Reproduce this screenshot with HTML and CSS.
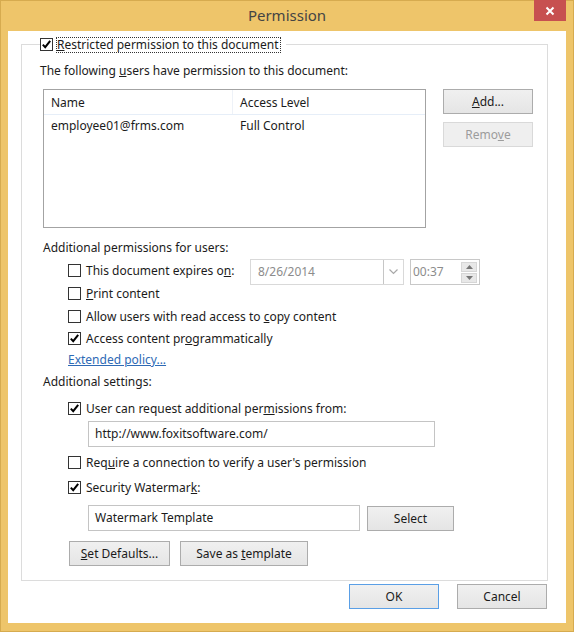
FILE: index.html
```html
<!DOCTYPE html>
<html lang="en">
<head>
    <meta charset="UTF-8">
    <title>Permission</title>
    <link rel="stylesheet" href="styles.css">
</head>
<body>
    <div class="window">
        <div class="titlebar">
            <span></span>
            <div class="title">Permission</div>
            <button class="close" title="Close">
                <svg width="10" height="10" viewBox="0 0 10 10"><path d="M1.5 1.5 L8.5 8.5 M8.5 1.5 L1.5 8.5" stroke="#fff" stroke-width="2"/></svg>
            </button>
        </div>

        <div class="client">
            <fieldset class="group">
                <legend class="legend">
                    <span class="box checked"><svg width="11" height="11" viewBox="0 0 11 11"><path d="M1.8 5.6 L4.2 8.2 L9.2 1.8" fill="none" stroke="#000" stroke-width="2"/></svg></span>
                    <span class="focus"><u>R</u>estricted permission to this document</span>
                </legend>

                <div class="intro">The following <u>u</u>sers have permission to this document:</div>

                <div class="users">
                    <div class="list">
                        <div class="list-head">
                            <div class="col-name">Name</div>
                            <div class="col-level">Access Level</div>
                        </div>
                        <div class="list-row">
                            <div class="col-name">employee01@frms.com</div>
                            <div class="col-level">Full Control</div>
                        </div>
                    </div>
                    <div class="side-buttons">
                        <button class="btn side"><u>A</u>dd...</button>
                        <button class="btn side" disabled>Remo<u>v</u>e</button>
                    </div>
                </div>

                <div class="section">Additional permissions for users:</div>

                <div class="expires">
                    <label class="opt opt-expires"><span class="box"></span><span>This document expires o<u>n</u>:</span></label>
                    <div class="combo">
                        <div class="combo-text">8/26/2014</div>
                        <div class="combo-drop">
                            <svg width="9" height="6" viewBox="0 0 9 6"><path d="M0.5 0.5 L4.5 4.5 L8.5 0.5" fill="none" stroke="#a8a8a8" stroke-width="1.2"/></svg>
                        </div>
                    </div>
                    <div class="time">
                        <div class="time-text">00:37</div>
                        <div class="spin">
                            <div class="spin-btn"><svg width="7" height="4" viewBox="0 0 7 4"><path d="M0 4 L3.5 0 L7 4 Z" fill="#777"/></svg></div>
                            <div class="spin-btn"><svg width="7" height="4" viewBox="0 0 7 4"><path d="M0 0 L3.5 4 L7 0 Z" fill="#777"/></svg></div>
                        </div>
                    </div>
                </div>

                <label class="opt gap-2"><span class="box"></span><span><u>P</u>rint content</span></label>
                <label class="opt gap-10"><span class="box"></span><span>Allow users with read access to <u>c</u>opy content</span></label>
                <label class="opt gap-9"><span class="box checked"><svg width="11" height="11" viewBox="0 0 11 11"><path d="M1.8 5.6 L4.2 8.2 L9.2 1.8" fill="none" stroke="#000" stroke-width="2"/></svg></span><span>Access content pr<u>o</u>grammatically</span></label>

                <a class="link" href="#">Extended policy...</a>

                <div class="section settings">Additional settings:</div>

                <label class="opt gap-12"><span class="box checked"><svg width="11" height="11" viewBox="0 0 11 11"><path d="M1.8 5.6 L4.2 8.2 L9.2 1.8" fill="none" stroke="#000" stroke-width="2"/></svg></span><span>User can request additional per<u>m</u>issions from:</span></label>
                <div class="textbox url">http://www.foxitsoftware.com/</div>

                <label class="opt gap-9"><span class="box"></span><span>Req<u>u</u>ire a connection to verify a user's permission</span></label>
                <label class="opt gap-12"><span class="box checked"><svg width="11" height="11" viewBox="0 0 11 11"><path d="M1.8 5.6 L4.2 8.2 L9.2 1.8" fill="none" stroke="#000" stroke-width="2"/></svg></span><span>Security Watermar<u>k</u>:</span></label>

                <div class="watermark">
                    <div class="textbox wm">Watermark Template</div>
                    <button class="btn select">Select</button>
                </div>

                <div class="templates">
                    <button class="btn defaults"><u>S</u>et Defaults...</button>
                    <button class="btn save">Save as <u>t</u>emplate</button>
                </div>
            </fieldset>

            <div class="actions">
                <button class="btn action default">OK</button>
                <button class="btn action">Cancel</button>
            </div>
        </div>
    </div>
</body>
</html>
```
FILE: styles.css
```css
body {
    margin: 0;
    font-family: "Segoe UI", "Noto Sans", sans-serif;
    font-size: 12px;
    color: #1b1b1b;
}

.window {
    width: 574px;
    height: 632px;
    box-sizing: border-box;
    background: #eec56a;
    border: 1px solid #d6ab4f;
    display: flex;
    flex-direction: column;
}

.titlebar {
    height: 30px;
    display: grid;
    grid-template-columns: 1fr auto 1fr;
    align-items: start;
}

.title {
    font-size: 15px;
    line-height: 29px;
    color: #444;
}

.close {
    justify-self: end;
    margin-right: 7px;
    margin-top: -1px;
    width: 32px;
    height: 21px;
    border: none;
    padding: 0;
    background: #c75050;
    display: flex;
    align-items: center;
    justify-content: center;
}

.client {
    margin: 0 7px 0 7px;
    height: 592px;
    background: #fff;
    display: flex;
    flex-direction: column;
}

/* group box */
.group {
    margin: 5px 0 0 13px;
    padding: 0 0 14px 0;
    width: 527px;
    box-sizing: border-box;
    border: 1px solid #dcdcdc;
    min-width: 0;
}

.legend {
    margin-left: 18px;
    padding: 0 5px 0 0;
    height: 17px;
    display: flex;
    align-items: center;
    gap: 3px;
}

.focus {
    border: 1px dotted #333;
    padding: 0 1px 0 0;
    line-height: 14px;
}

.box {
    width: 13px;
    height: 13px;
    box-sizing: border-box;
    border: 1px solid #333;
    background: #fff;
    display: flex;
    align-items: center;
    justify-content: center;
    flex: none;
}

.intro {
    margin: 10px 0 0 18px;
    line-height: 16px;
}

.users {
    margin: 10px 0 0 21px;
    display: flex;
    gap: 17px;
}

.list {
    width: 383px;
    height: 139px;
    box-sizing: border-box;
    border: 1px solid #a3a3a3;
}

.list-head,
.list-row {
    display: flex;
}

.list-head {
    height: 24px;
    border-bottom: 1px solid #e6eef8;
    align-items: center;
}

.list-row {
    height: 20px;
    align-items: center;
}

.col-name {
    width: 189px;
    padding-left: 7px;
    box-sizing: border-box;
}

.list-head .col-name {
    border-right: 1px solid #eef2f8;
    height: 100%;
    display: flex;
    align-items: center;
}

.col-level {
    padding-left: 7px;
}

.side-buttons {
    display: flex;
    flex-direction: column;
    gap: 8px;
}

.btn {
    font-family: inherit;
    font-size: 12px;
    color: #1b1b1b;
    height: 25px;
    box-sizing: border-box;
    border: 1px solid #acacac;
    background: linear-gradient(#f0f0f0, #e5e5e5);
    padding: 0;
}

.btn:disabled {
    color: #9c9c9c;
    border-color: #d9d9d9;
    background: #efefef;
}

.side {
    width: 90px;
}

.section {
    margin: 12px 0 0 21px;
    line-height: 16px;
}

.settings {
    margin-top: 6px;
}

.opt {
    display: flex;
    align-items: center;
    gap: 5px;
    height: 13px;
    line-height: 13px;
    margin-left: 46px;
}

.gap-2 { margin-top: 2px; }
.gap-9 { margin-top: 9px; }
.gap-10 { margin-top: 10px; }
.gap-12 { margin-top: 12px; }

.expires {
    margin: 3px 0 0 46px;
    display: flex;
    align-items: flex-start;
    gap: 6px;
}

.opt-expires {
    margin: 5px 0 0 0;
    width: 182px;
}

.combo {
    width: 154px;
    height: 26px;
    box-sizing: border-box;
    border: 1px solid #d9d9d9;
    display: flex;
    margin-left: -6px;
}

.combo-text,
.time-text {
    flex: 1;
    color: #8c8c8c;
    line-height: 24px;
}

.combo-text {
    padding-left: 7px;
}

.combo-drop {
    width: 19px;
    border-left: 1px solid #c6c6c6;
    display: flex;
    align-items: center;
    justify-content: center;
}

.time {
    width: 70px;
    height: 26px;
    box-sizing: border-box;
    border: 1px solid #c8c8c8;
    display: flex;
    align-items: center;
}

.time-text {
    padding-left: 2px;
}

.spin {
    width: 16px;
    height: 21px;
    margin-right: 2px;
    display: flex;
    flex-direction: column;
    gap: 1px;
}

.spin-btn {
    flex: 1;
    background: #e8e8e8;
    border: 1px solid #d6d6d6;
    display: flex;
    align-items: center;
    justify-content: center;
}

.link {
    margin: 7px 0 0 46px;
    line-height: 16px;
    color: #2e6ab5;
    align-self: flex-start;
    display: inline-block;
}

.textbox {
    height: 26px;
    box-sizing: border-box;
    border: 1px solid #c4c4c4;
    padding-left: 6px;
    line-height: 24px;
}

.url {
    margin: 6px 0 0 66px;
    width: 347px;
}

.watermark {
    margin: 11px 0 0 66px;
    display: flex;
    align-items: center;
    gap: 7px;
}

.wm {
    width: 272px;
}

.select {
    width: 87px;
}

.templates {
    margin: 10px 0 0 47px;
    display: flex;
    gap: 10px;
}

.defaults {
    width: 101px;
}

.save {
    width: 128px;
}

.actions {
    margin-top: 3px;
    padding-right: 19px;
    display: flex;
    justify-content: flex-end;
    gap: 18px;
}

.action {
    width: 90px;
}

.default {
    border-color: #5a9fe6;
}
```
